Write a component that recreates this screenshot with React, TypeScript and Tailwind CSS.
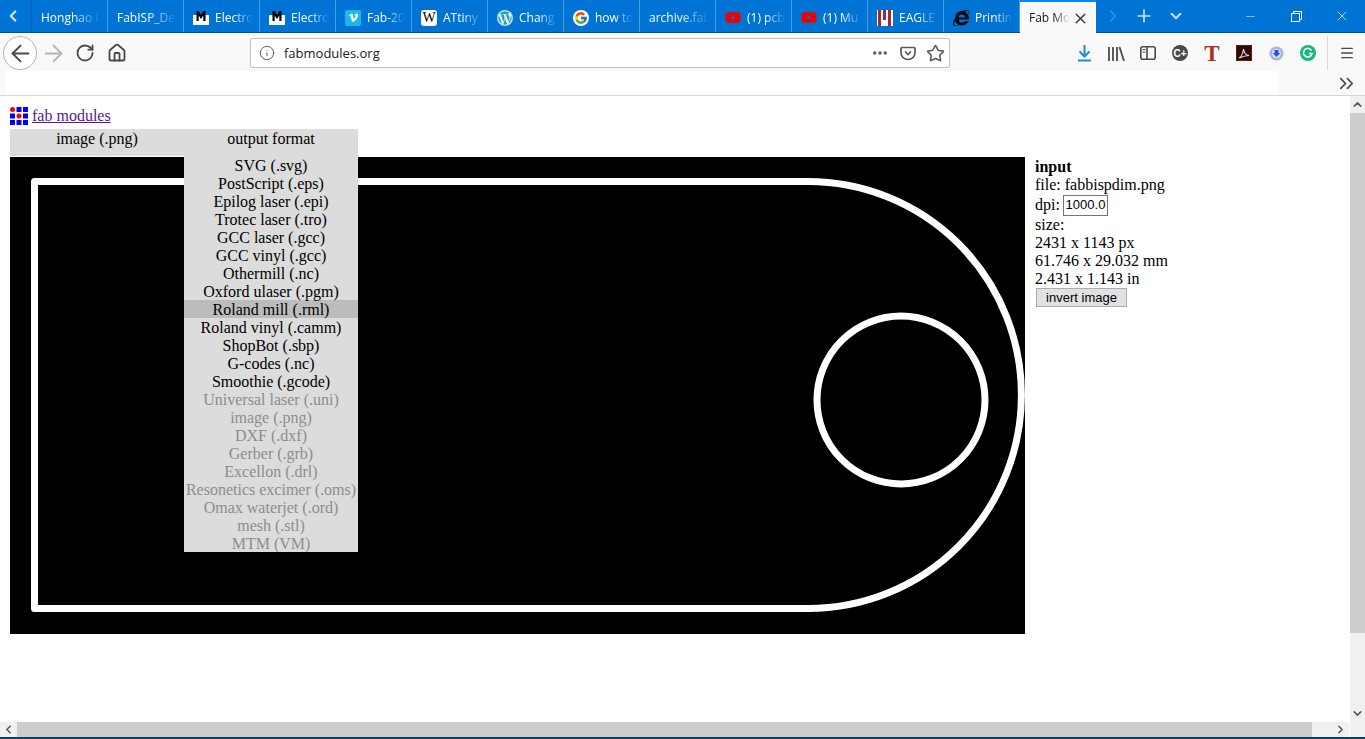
import React from "react";
import { FaVimeoV, FaWordpress, FaYoutube, FaInternetExplorer } from "react-icons/fa";
import { FcGoogle } from "react-icons/fc";
import { ChevronLeft, ChevronRight, ChevronDown, ChevronUp, ChevronsRight, Plus, X, Minus, ArrowLeft, ArrowRight, RotateCw, House, Info, Ellipsis, Star, Menu } from "lucide-react";

const MIcon = () => (
  <svg width="16" height="16" viewBox="0 0 16 16">
    <rect x="0" y="5" width="16" height="10" fill="#fff" />
    <path d="M3.500 11V1h2.200L8 5l2.300-4h2.200v10h-2.200V5.500L8 9 5.700 5.500V11z" fill="#000" />
  </svg>
);
const Wiki = () => (
  <span className="flex h-4 w-4 items-center justify-center rounded-[3px] bg-white font-['Liberation_Serif',serif] text-[14px] leading-none text-black">W</span>
);
const Eagle = () => (
  <svg width="16" height="16" viewBox="0 0 16 16">
    <rect width="16" height="16" fill="#fff" />
    <rect x="1" y="0" width="3" height="16" fill="#9a2b35" />
    <rect x="6" y="0" width="3" height="10" fill="#9a2b35" />
    <rect x="11" y="0" width="3" height="16" fill="#9a2b35" />
  </svg>
);

const tabs: { t: string; i?: React.ReactNode }[] = [
  { t: "Honghao I" },
  { t: "FabISP_De" },
  { t: "Electro", i: <MIcon /> },
  { t: "Electro ", i: <MIcon /> },
  { t: "Fab-20", i: <span className="flex h-4 w-4 items-center justify-center rounded-[2px] bg-[#1ab7ea] text-[11px] text-white"><FaVimeoV /></span> },
  { t: "ATtiny", i: <Wiki /> },
  { t: "Chang", i: <span className="flex h-4 w-4 items-center justify-center rounded-full bg-white text-[16px] text-[#21a0c0]"><FaWordpress /></span> },
  { t: "how to", i: <span className="flex h-4 w-4 items-center justify-center rounded-full bg-white text-[14px]"><FcGoogle /></span> },
  { t: "archive.fab" },
  { t: "(1) pcb", i: <FaYoutube className="text-[17px] text-[#f00000]" /> },
  { t: "(1) Mu", i: <FaYoutube className="text-[17px] text-[#f00000]" /> },
  { t: "EAGLE", i: <Eagle /> },
  { t: "Printin", i: <FaInternetExplorer className="text-[16px] text-[#0a0a14]" /> },
];

const items = [
  "SVG (.svg)", "PostScript (.eps)", "Epilog laser (.epi)", "Trotec laser (.tro)", "GCC laser (.gcc)", "GCC vinyl (.gcc)", "Othermill (.nc)", "Oxford ulaser (.pgm)", "Roland mill (.rml)", "Roland vinyl (.camm)", "ShopBot (.sbp)", "G-codes (.nc)", "Smoothie (.gcode)",
];
const disabled = ["Universal laser (.uni)", "image (.png)", "DXF (.dxf)", "Gerber (.grb)", "Excellon (.drl)", "Resonetics excimer (.oms)", "Omax waterjet (.ord)", "mesh (.stl)", "MTM (VM)"];

const Cell = ({ children }: { children: React.ReactNode }) => (
  <div className="flex h-8 w-8 items-center justify-center">{children}</div>
);

export default function App() {
  return (
    <div className="flex h-[739px] w-[1365px] flex-col overflow-hidden bg-white font-['Liberation_Serif',serif] text-[16px] text-black">
      {/* tab bar */}
      <div className="flex h-[33px] shrink-0 border-b border-[#00528f] bg-[#0074d4] font-['Open_Sans',sans-serif] text-[12px]">
        <div className="flex w-[32px] items-center justify-center border-r border-[#0060b0] pr-[5px] text-[#cfe6fa]">
          <ChevronLeft size={18} strokeWidth={3} />
        </div>
        {tabs.map((x) => (
          <div key={x.t} className="flex w-[76px] items-center gap-[6px] overflow-hidden border-r border-[#4a9fe4] pl-[9px] pr-[6px] pt-[3px] text-white">
            {x.i && <span className="flex w-4 shrink-0 justify-center">{x.i}</span>}
            <span className="min-w-0 flex-1 whitespace-nowrap [mask-image:linear-gradient(to_right,black_50%,transparent_100%)]">{x.t}</span>
          </div>
        ))}
        <div className="-mb-px flex w-[76px] items-center border-t-2 border-[#0a84ff] bg-[#f9f9fa] pl-[9px] pt-[1px] text-[#18181a]">
          <span className="w-[41px] whitespace-nowrap [mask-image:linear-gradient(to_right,black_60%,transparent_100%)]">Fab Mo</span>
          <X size={17} strokeWidth={2} className="ml-[2px] text-[#3a3a3c]" />
        </div>
        <div className="flex w-[32px] items-center justify-center pl-[2px] text-[#3b92e0]"><ChevronRight size={20} strokeWidth={2} /></div>
        <div className="flex w-[32px] items-center justify-center text-[#cfe6fa]"><Plus size={20} strokeWidth={2} /></div>
        <div className="flex w-[32px] items-center justify-center text-[#cfe6fa]"><ChevronDown size={18} strokeWidth={2.4} /></div>
        <div className="ml-auto flex text-white">
          <div className="flex w-[46px] items-center justify-center"><Minus size={13} strokeWidth={1} /></div>
          <div className="flex w-[46px] items-center justify-center">
            <svg width="11" height="11" viewBox="0 0 11 11" fill="none" stroke="currentColor"><rect x="0.5" y="2.5" width="8" height="8" /><path d="M2.500 2.500v-2h8v8h-2" /></svg>
          </div>
          <div className="flex w-[46px] items-center justify-center"><X size={16} strokeWidth={1} /></div>
        </div>
      </div>

      {/* nav toolbar */}
      <div className="flex h-[38px] shrink-0 items-center bg-[#f9f9fa] pt-[2px] text-[#4a4a4f]">
        <div className="ml-[3px] flex h-[34px] w-[34px] items-center justify-center rounded-full border border-[#b5b5b7] bg-white">
          <ArrowLeft size={27} strokeWidth={1.7} />
        </div>
        <div className="flex w-[32px] justify-center text-[#b4b4b6]"><ArrowRight size={27} strokeWidth={1.7} /></div>
        <div className="flex w-[32px] justify-center"><RotateCw size={20} strokeWidth={2.2} /></div>
        <div className="flex w-[32px] justify-center"><House size={20} strokeWidth={2.2} /></div>
        <div className="ml-[117px] flex h-[30px] w-[700px] items-center rounded-[2px] border border-[#c2c2c4] bg-white pl-[8px] pr-[4px]">
          <Info size={16} strokeWidth={1.5} className="text-[#5a5a5e]" />
          <span className="ml-[9px] flex-1 pt-[2px] font-['Open_Sans',sans-serif] text-[13px] text-[#1a1a1c]">fabmodules.org</span>
          <Ellipsis size={18} strokeWidth={2.6} className="mr-[11px] text-[#5a5a5e]" />
          <svg width="16" height="16" viewBox="0 0 16 16" fill="none" stroke="#5a5a5e" strokeWidth="1.7" className="mr-[10px]"><path d="M2 2.500h12a1 1 0 0 1 1 1V8a7 6.500 0 0 1-14 0V3.500a1 1 0 0 1 1-1z" /><path d="M5 6.500l3 3 3-3" /></svg>
          <Star size={19} strokeWidth={2} className="text-[#5a5a5e]" />
        </div>
        <div className="ml-[118px] flex items-center">
          <Cell>
            <svg width="15" height="17" viewBox="0 0 15 17" fill="none" stroke="#2088e0" strokeWidth="2"><path d="M7.500 0v11M2.500 6.500l5 5 5-5M1 15.500h13" /></svg>
          </Cell>
          <Cell>
            <svg width="17" height="15" viewBox="0 0 17 15" fill="none" stroke="#4a4a4f" strokeWidth="1.8"><path d="M1 1v14M5 1v14M9 1v14M11.500 1l4.500 14" /></svg>
          </Cell>
          <Cell>
            <svg width="16" height="14" viewBox="0 0 16 14" fill="none" stroke="#4a4a4f" strokeWidth="1.6"><rect x="0.8" y="0.8" width="14.4" height="12.4" rx="2" /><path d="M7 1v12" /><path d="M2.500 3.500h3M2.500 6h3" strokeWidth="1.2" /></svg>
          </Cell>
          <Cell>
            <span className="flex h-4 w-4 items-center justify-center rounded-full bg-[#4a4a4a] font-['Liberation_Sans',sans-serif] text-[10px] font-bold text-white">C+</span>
          </Cell>
          <Cell><span className="font-['Liberation_Serif',serif] text-[23px] font-bold leading-none text-[#b03020]">T</span></Cell>
          <Cell>
            <span className="flex h-4 w-4 items-center justify-center border border-[#7a1010] bg-[#2c0a0a]">
              <svg width="12" height="12" viewBox="0 0 12 12" fill="none" stroke="#e8d8d8" strokeWidth="1.1"><path d="M1 11c2-1 4-5 4.500-9 .5 4 2 6 5.500 6.500-3 0-6 1-10 2.500z" /></svg>
            </span>
          </Cell>
          <Cell>
            <svg width="15" height="15" viewBox="0 0 15 15"><circle cx="7.500" cy="7.500" r="7" fill="#a8b4d8" /><circle cx="7.500" cy="7.500" r="4.500" fill="#dfe5f5" /><path d="M5.500 4h4v3h2l-4 4-4-4h2z" fill="#2a50e0" /></svg>
          </Cell>
          <Cell>
            <svg width="16" height="16" viewBox="0 0 16 16"><circle cx="8" cy="8" r="8" fill="#15b77e" /><path d="M11.500 5.500A4.300 4.300 0 1 0 12 8.500H9" fill="none" stroke="#fff" strokeWidth="1.500" /></svg>
          </Cell>
          <div className="ml-[3px] h-[34px] w-px bg-[#d8d8da]" />
          <div className="ml-[11px] flex w-4 justify-center"><Menu size={20} strokeWidth={2} /></div>
        </div>
      </div>

      {/* bookmarks bar */}
      <div className="flex h-[25px] shrink-0 border-b border-[#d7d7db] bg-white">
        <div className="w-[5px] bg-[#f9f9fa]" />
        <div className="flex-1" />
        <div className="flex w-[87px] items-center justify-end bg-[#f9f9fa] pr-[7px] text-[#4a4a4f]">
          <ChevronsRight size={23} strokeWidth={1.8} />
        </div>
      </div>

      {/* page */}
      <div className="flex min-h-0 flex-1 flex-col">
        <div className="flex min-h-0 flex-1">
          <div className="relative min-w-0 flex-1 pl-[10px] pt-[10px]">
            <div className="flex h-[20px] items-center">
              <svg width="18" height="18" viewBox="0 0 18 18" className="shrink-0">
                <circle cx="2.500" cy="2.500" r="2.500" fill="#f00" /><rect x="6.500" width="5" height="5" fill="#00f" /><rect x="13" width="5" height="5" fill="#00f" />
                <rect y="6.500" width="5" height="5" fill="#00f" /><circle cx="9" cy="9" r="2.500" fill="#f00" /><rect x="13" y="6.500" width="5" height="5" fill="#00f" />
                <rect y="13" width="5" height="5" fill="#00f" /><rect x="6.500" y="13" width="5" height="5" fill="#00f" /><rect x="13" y="13" width="5" height="5" fill="#00f" />
              </svg>
              <a href="#" className="ml-[4px] text-[#551a8b] underline">fab modules</a>
            </div>
            <div className="mt-[3px] flex h-[27px] w-[348px] bg-[#dcdcdc] leading-[18px]">
              <div className="w-[174px] pt-px text-center">image (.png)</div>
              <div className="w-[174px] pt-px text-center">output format</div>
            </div>
            <div className="flex items-start">
              <svg width="1015" height="477" viewBox="10 157 1015 477" className="mt-px block shrink-0 bg-black">
                <path d="M34.500 181.500H808A213.500 213.500 0 0 1 808 608.500H34.500Z" fill="none" stroke="#fff" strokeWidth="7" strokeLinejoin="round" />
                <circle cx="901" cy="400" r="84" fill="none" stroke="#fff" strokeWidth="7" />
              </svg>
              <div className="ml-[10px] mt-[2px] whitespace-nowrap leading-[18px]">
                <div className="font-bold">input</div>
                <div>file: fabbispdim.png</div>
                <div className="flex h-[22px] items-center">
                  <span className="w-[28px]">dpi:</span>
                  <span className="flex h-[21px] w-[45px] items-center justify-center border border-[#767676] font-['Liberation_Sans',sans-serif] text-[13px]">1000.0</span>
                </div>
                <div>size:</div>
                <div>2431 x 1143 px</div>
                <div>61.746 x 29.032 mm</div>
                <div>2.431 x 1.143 in</div>
                <button className="ml-px flex h-[19px] w-[91px] items-center justify-center border border-[#adadad] bg-[#e1e1e1] font-['Liberation_Sans',sans-serif] text-[13px]">invert image</button>
              </div>
            </div>
            {/* dropdown menu over the image */}
            <div className="absolute left-[184px] top-[60px] w-[174px] bg-[#dcdcdc] text-center leading-[18px]">
              {items.map((s) => (
                <div key={s} className={s.startsWith("Roland mill") ? "h-[18px] bg-[#bcbcbc] pt-px" : "h-[18px] pt-px"}>{s}</div>
              ))}
              {disabled.map((s) => (
                <div key={s} className="h-[18px] whitespace-nowrap pt-px text-[#8c8c8c]">{s}</div>
              ))}
            </div>
          </div>
          {/* vertical scrollbar */}
          <div className="flex w-[15px] shrink-0 flex-col bg-[#f0f0f0] text-[#5a5a5a]">
            <div className="flex h-[17px] items-center justify-center"><ChevronUp size={13} strokeWidth={3} /></div>
            <div className="h-[520px] bg-[#cdcdcd]" />
            <div className="flex-1" />
            <div className="flex h-[17px] items-center justify-center"><ChevronDown size={13} strokeWidth={3} /></div>
          </div>
        </div>
        {/* horizontal scrollbar */}
        <div className="flex h-[15px] shrink-0 bg-white">
          <div className="flex w-[1349px] bg-[#f0f0f0] text-[#5a5a5a]">
            <div className="flex w-[17px] items-center justify-center"><ChevronLeft size={13} strokeWidth={3} /></div>
            <div className="w-[1295px] bg-[#cdcdcd]" />
            <div className="flex-1" />
            <div className="flex w-[17px] items-center justify-center"><ChevronRight size={13} strokeWidth={3} /></div>
          </div>
          <div className="ml-px flex-1 bg-[#f0f0f0]" />
        </div>
        <div className="h-[2px] shrink-0 bg-[#123f52]" />
      </div>
    </div>
  );
}
